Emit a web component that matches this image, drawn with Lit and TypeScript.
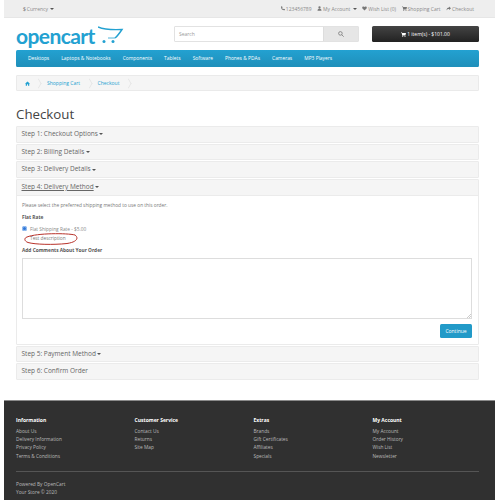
import { LitElement, html, css, svg } from "lit";
import { customElement } from "lit/decorators.js";

const caret = html`<span class="caret"></span>`;
const phone = svg`<path d="M2 1l2-.5 1.200 2.500-1 1c.5 1 1.300 1.800 2.300 2.300l1-1L10 6.500 9.500 8.500C5 9 1.500 5.500 2 1z"/>`;
const user = svg`<circle cx="5" cy="3" r="2.300"/><path d="M1 9.500c0-3 1.500-4 4-4s4 1 4 4z"/>`;
const heart = svg`<path d="M5 9.200 1 5C-.5 3 1 .8 3 1c1 0 1.600.6 2 1.200C5.400 1.600 6 1 7 1c2-.2 3.500 2 2 4z"/>`;
const cart = svg`<path d="M0 1h2l.4 1H10L9 6H3.300l.2 1H9v1H2.700L1.300 2H0z"/><circle cx="3.500" cy="9" r="1"/><circle cx="8" cy="9" r="1"/>`;
const share = svg`<path d="M6 1l4 3.500L6 8V6C4 6 2 6.500 1 9c0-4 2-6 5-6z"/>`;
const icon = (p: unknown) => html`<svg class="ic" viewBox="0 0 10 10">${p}</svg>`;

const cols = [
  ["Information", ["About Us", "Delivery Information", "Privacy Policy", "Terms & Conditions"]],
  ["Customer Service", ["Contact Us", "Returns", "Site Map"]],
  ["Extras", ["Brands", "Gift Certificates", "Affiliates", "Specials"]],
  ["My Account", ["My Account", "Order History", "Wish List", "Newsletter"]],
] as [string, string[]][];

@customElement("app-root")
export class AppRoot extends LitElement {
  static styles = css`
    :host { display: block; width: 500px; height: 500px; overflow: hidden; background: #fff; font-family: "Open Sans", sans-serif; font-size: 5px; color: #777; }
    .page { width: 491px; margin-left: 4px; height: 500px; display: flex; flex-direction: column; position: relative; }
    .wrap { padding: 0 16px 0 12px; }
    .top { height: 18px; background: #eee; border-bottom: 1px solid #e6e6e6; box-sizing: border-box; display: flex; align-items: center; justify-content: space-between; padding: 0 21px 0 19px; color: #8a8a8a; }
    .links { display: flex; gap: 5.500px; align-items: center; }
    .links span, .cur { display: flex; align-items: center; gap: 1px; }
    .ic { width: 5px; height: 5px; fill: #777; flex: none; }
    .caret { display: inline-block; width: 0; height: 0; border: 2px solid transparent; border-top: 2.500px solid #555; border-bottom: 0; margin-left: 1.500px; vertical-align: middle; }
    header { display: flex; height: 32px; padding-top: 8px; box-sizing: border-box; align-items: flex-start; }
    .logo { width: 158px; display: flex; gap: 3px; height: 22px; }
    .brand { font: 700 21px/20px "Lato", sans-serif; color: #23a1d1; letter-spacing: -.6px; }
    .cart-logo { width: 26px; height: 20px; fill: none; stroke: #23a1d1; }
    .search { width: 185px; height: 16px; display: flex; border: 1px solid #e2e2e2; box-sizing: border-box; border-radius: 1px; }
    .search .in { flex: 1; padding: 0 4px; line-height: 14px; color: #999; }
    .search .btn { width: 34px; background: #e6e6e6; border-left: 1px solid #ddd; display: flex; align-items: center; justify-content: center; }
    .search svg { width: 6px; height: 6px; fill: none; stroke: #777; stroke-width: 1.300; }
    .cartbtn { width: 107px; height: 16px; margin-left: 13px; border-radius: 1.500px; background: linear-gradient(#444, #222); color: #fff; display: flex; align-items: center; justify-content: center; gap: 1px; }
    .cartbtn .ic { fill: #fff; }
    nav { height: 17px; background: linear-gradient(#23a1d1, #1f90bb); border-radius: 1.500px; display: flex; align-items: center; padding-left: 12px; gap: 12.100px; color: #fff; font-size: 4.900px; border-bottom: 1px solid #1f90bb; box-sizing: border-box; }
    .crumb { height: 16px; margin-top: 8px; border: 1px solid #eaeaea; background: #f5f5f5; box-sizing: border-box; border-radius: 1px; display: flex; align-items: center; padding-left: 7.500px; color: #23a1d1; }
    .crumb .ic { fill: #23a1d1; }
    .crumb b { font-weight: 400; padding-left: 5px; }
    .crumb .sep { width: 6px; height: 6px; border-top: 1px solid #e4e4e4; border-right: 1px solid #e4e4e4; transform: scaleX(.6) rotate(45deg); margin-left: 5.500px; }
    h1 { margin: 14px 0 3px; font: 400 13.300px/18px "Open Sans", sans-serif; color: #444; }
    .panel { border: 1px solid #ebebeb; border-radius: 1px; margin-bottom: 1px; box-sizing: border-box; }
    .head { height: 14.700px; background: #f5f5f5; padding-left: 4.500px; font-size: 6.500px; line-height: 14.700px; color: #666; }
    .head u { text-underline-offset: 1px; }
    .body { height: 149px; padding: 6px 6px 0 5px; box-sizing: border-box; border-top: 1px solid #ebebeb; font-size: 4.800px; line-height: 6px; }
    .body p { margin: 0; }
    .body .bold { font-weight: 700; color: #555; margin-top: 6px; }
    .radio { display: flex; align-items: center; gap: 3px; margin-top: 6px; color: #888; }
    .dot { width: 5px; height: 5px; border-radius: 50%; background: #2f76d8; box-shadow: inset 0 0 0 1px #9cc2f0; flex: none; }
    .body .desc { padding-left: 8px; margin-top: 3px; }
    .ta { height: 61px; margin-top: 5px; border: 1px solid #ddd; box-sizing: border-box; display: flex; justify-content: flex-end; align-items: flex-end; }
    .ta svg { width: 4px; height: 4px; stroke: #999; stroke-width: .5; }
    .act { display: flex; justify-content: flex-end; margin-top: 5px; }
    .go { width: 32px; height: 14px; line-height: 14px; text-align: center; background: #229ac8; color: #fff; border-radius: 1.500px; font-size: 5px; }
    .ring { position: absolute; left: 19px; top: 231.500px; width: 56px; height: 13px; fill: none; stroke: #b8322a; stroke-width: 1; }
    footer { margin-top: auto; height: 100px; background: #303030; border-top: 1px solid #8a8a8a; box-sizing: border-box; padding: 16px 16px 0 12px; color: #bbb; font-size: 4.800px; }
    .fc { display: grid; grid-template-columns: 118.500px 119px 119px 1fr; height: 51px; line-height: 8.200px; }
    .fc h5 { margin: 0 0 3px; color: #fff; font-size: 5px; font-weight: 700; line-height: 7px; }
    .fc div span { display: block; }
    footer hr { border: 0; border-top: 1px solid #555; margin: 3px 0 8px; }
    .pow { line-height: 8px; }
  `;

  render() {
    return html`<div class="page">
      <div class="top">
        <span class="cur"><b>$</b> Currency${caret}</span>
        <div class="links">
          <span>${icon(phone)}123456789</span>
          <span>${icon(user)}My Account${caret}</span>
          <span>${icon(heart)}Wish List (0)</span>
          <span>${icon(cart)}Shopping Cart</span>
          <span>${icon(share)}Checkout</span>
        </div>
      </div>
      <div class="wrap">
        <header>
          <div class="logo">
            <span class="brand">opencart</span>
            <svg class="cart-logo" viewBox="0 0 26 20">
              <path d="M0 1c6 2.500 14 3 24 2.500-2 3-4 6-7 8.500" stroke-width="1.400"/>
              <path d="M10 12h7" stroke-width=".8"/>
              <circle cx="6" cy="15.500" r="1.500" fill="#23a1d1" stroke="none"/>
              <circle cx="15" cy="15.500" r="1.500" fill="#23a1d1" stroke="none"/>
            </svg>
          </div>
          <div class="search">
            <div class="in">Search</div>
            <div class="btn"><svg viewBox="0 0 10 10"><circle cx="4" cy="4" r="3"/><path d="M6.300 6.300 9.500 9.500"/></svg></div>
          </div>
          <div class="cartbtn">${icon(cart)}1 item(s) - $101.00</div>
        </header>
        <nav>
          <span>Desktops</span><span>Laptops &amp; Notebooks</span><span>Components</span><span>Tablets</span><span>Software</span><span>Phones &amp; PDAs</span><span>Cameras</span><span>MP3 Players</span>
        </nav>
        <div class="crumb">
          <svg class="ic" viewBox="0 0 10 10"><path d="M5 1 10 5.500H8.500V9.500H6V6.500H4V9.500H1.500V5.500H0z"/></svg><i class="sep"></i>
          <b>Shopping Cart</b><i class="sep"></i>
          <b>Checkout</b><i class="sep"></i>
        </div>
        <h1>Checkout</h1>
        <div class="panel"><div class="head">Step 1: Checkout Options${caret}</div></div>
        <div class="panel"><div class="head">Step 2: Billing Details${caret}</div></div>
        <div class="panel"><div class="head">Step 3: Delivery Details${caret}</div></div>
        <div class="panel">
          <div class="head"><u>Step 4: Delivery Method</u>${caret}</div>
          <div class="body">
            <p>Please select the preferred shipping method to use on this order.</p>
            <p class="bold">Flat Rate</p>
            <div class="radio"><i class="dot"></i>Flat Shipping Rate - $5.00</div>
            <p class="desc">Test description</p>
            <p class="bold">Add Comments About Your Order</p>
            <div class="ta"><svg viewBox="0 0 4 4"><path d="M0 4 4 0M2 4 4 2"/></svg></div>
            <div class="act"><div class="go">Continue</div></div>
          </div>
        </div>
        <div class="panel"><div class="head">Step 5: Payment Method${caret}</div></div>
        <div class="panel"><div class="head">Step 6: Confirm Order</div></div>
      </div>
      <svg class="ring" viewBox="0 0 56 13"><path d="M4 5C14 1 44 1 52 3c4 3 2 7-8 8.500-14 1.500-32 1-39-1C1 9 1 6 4 5z"/></svg>
      <footer>
        <div class="fc">
          ${cols.map(([t, items]) => html`<div><h5>${t}</h5>${items.map((i) => html`<span>${i}</span>`)}</div>`)}
        </div>
        <hr />
        <div class="pow">Powered By OpenCart<br />Your Store © 2020</div>
      </footer>
    </div>`;
  }
}
